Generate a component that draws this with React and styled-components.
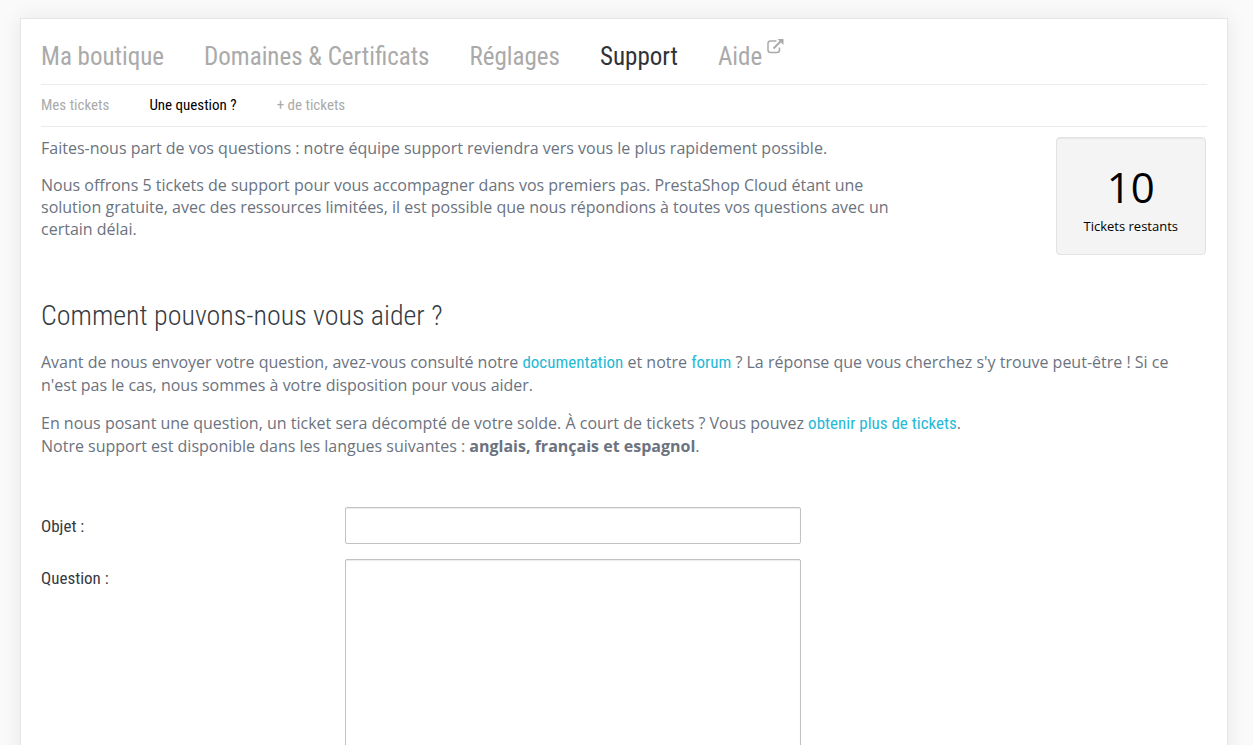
import React from "react";
import styled, { createGlobalStyle } from "styled-components";

const condensed = `"Roboto Condensed", Roboto, "Liberation Sans", sans-serif`;

const GlobalStyle = createGlobalStyle`
    * {
        box-sizing: border-box;
    }
    body {
        margin: 0;
        background: #fafafa;
        color: #6b7380;
        font-family: "Open Sans", "Noto Sans", sans-serif;
        font-size: 16px;
    }
`;

const Panel = styled.main`
    margin: 18px 25px 18px 20px;
    padding: 10px 20px 40px;
    background: white;
    border: 1px solid #e4e7ea;
    box-shadow: 0 0 20px rgba(0, 0, 0, 0.08);
`;

const Tabs = styled.nav`
    display: flex;
    gap: 40px;
    height: 56px;
    align-items: center;
    border-bottom: 1px solid #ebebeb;
`;

const Tab = styled.a`
    display: flex;
    gap: 5px;
    color: ${(props) => (props.$active ? "#2f3338" : "#aaaaaa")};
    font-family: ${condensed};
    font-size: 25px;
    line-height: 36px;
    text-decoration: none;
`;

const SubTabs = styled(Tabs)`
    height: 42px;
`;

const SubTab = styled(Tab)`
    color: ${(props) => (props.$active ? "#000000" : "#aaaaaa")};
    font-size: 15px;
    line-height: 19px;
`;

const Intro = styled.section`
    display: flex;
    justify-content: space-between;
    align-items: flex-start;
    padding: 10px 1px 0 0;
    line-height: 22px;
`;

const IntroText = styled.div`
    width: 75%;
`;

const Text = styled.p`
    margin: 0 0 15px;
`;

const Counter = styled.div`
    display: flex;
    flex-direction: column;
    align-items: center;
    padding: 20px 27px 18px;
    background: #f4f4f4;
    border: 1px solid #e3e3e3;
    border-radius: 4px;
    box-shadow: inset 0 1px 1px rgba(0, 0, 0, 0.05);
    color: black;
    font-size: 13px;
    line-height: 20px;
`;

const Count = styled.span`
    font-size: 42px;
    line-height: 58px;
`;

const Help = styled.section`
    margin-top: 41px;
    line-height: 23px;
`;

const Title = styled.h2`
    margin: 0 0 15px;
    color: #363a41;
    font-family: ${condensed};
    font-size: 28px;
    font-weight: 300;
    line-height: 40px;
`;

const Link = styled.a`
    color: #25b9d7;
    font-family: ${condensed};
    font-size: 17px;
    text-decoration: none;
`;

const Form = styled.form`
    display: grid;
    grid-template-columns: 2fr 3fr;
    row-gap: 15px;
    max-width: 760px;
    margin-top: 49px;
`;

const Label = styled.label`
    padding-top: 8px;
    color: #363a41;
    font-family: ${condensed};
    font-size: 17px;
    line-height: 23px;
`;

const Field = styled.input`
    width: 100%;
    height: 37px;
    padding: 6px 10px;
    background: white;
    border: 1px solid #c2c2c2;
    border-radius: 2px;
    box-shadow: inset 0 1px 1px rgba(0, 0, 0, 0.08);
    color: #363a41;
    font: inherit;
`;

const Area = styled(Field)`
    height: 260px;
    resize: vertical;
`;

const ExternalIcon = () => (
    <svg width="17" height="15" viewBox="0 0 17 15" fill="none" stroke="currentColor">
        <path
            d="M9.5 2H3.5Q1 2 1 4.5V11Q1 13.5 3.5 13.5H10Q12.5 13.5 12.5 11V8.5"
            strokeWidth="1.5"
        />
        <path d="M6.5 9.5L13.5 2.5" strokeWidth="2" />
        <path d="M10.5 0H16.5V6Z" fill="currentColor" stroke="none" />
    </svg>
);

const tabs = ["Ma boutique", "Domaines & Certificats", "Réglages", "Support"];
const subTabs = ["Mes tickets", "Une question ?", "+ de tickets"];

const App = () => {
    return (
        <>
            <GlobalStyle />
            <Panel>
                <Tabs>
                    {tabs.map((item) => (
                        <Tab href="#" key={item} $active={item === "Support"}>
                            {item}
                        </Tab>
                    ))}
                    <Tab href="#">
                        Aide
                        <ExternalIcon />
                    </Tab>
                </Tabs>
                <SubTabs>
                    {subTabs.map((item) => (
                        <SubTab href="#" key={item} $active={item === "Une question ?"}>
                            {item}
                        </SubTab>
                    ))}
                </SubTabs>
                <Intro>
                    <IntroText>
                        <Text>
                            Faites-nous part de vos questions : notre équipe support
                            reviendra vers vous le plus rapidement possible.
                        </Text>
                        <Text>
                            Nous offrons 5 tickets de support pour vous accompagner dans
                            vos premiers pas. PrestaShop Cloud étant une solution
                            gratuite, avec des ressources limitées, il est possible que
                            nous répondions à toutes vos questions avec un certain délai.
                        </Text>
                    </IntroText>
                    <Counter>
                        <Count>10</Count>
                        Tickets restants
                    </Counter>
                </Intro>
                <Help>
                    <Title>Comment pouvons-nous vous aider ?</Title>
                    <Text>
                        Avant de nous envoyer votre question, avez-vous consulté notre{" "}
                        <Link href="#">documentation</Link> et notre{" "}
                        <Link href="#">forum</Link> ? La réponse que vous cherchez s'y
                        trouve peut-être ! Si ce n'est pas le cas, nous sommes à votre
                        disposition pour vous aider.
                    </Text>
                    <Text>
                        En nous posant une question, un ticket sera décompté de votre
                        solde. À court de tickets ? Vous pouvez{" "}
                        <Link href="#">obtenir plus de tickets</Link>.
                        <br />
                        Notre support est disponible dans les langues suivantes :{" "}
                        <b>anglais, français et espagnol</b>.
                    </Text>
                </Help>
                <Form>
                    <Label htmlFor="subject">Objet :</Label>
                    <Field id="subject" type="text" />
                    <Label htmlFor="question">Question :</Label>
                    <Area as="textarea" id="question" />
                </Form>
            </Panel>
        </>
    );
};

export default App;
